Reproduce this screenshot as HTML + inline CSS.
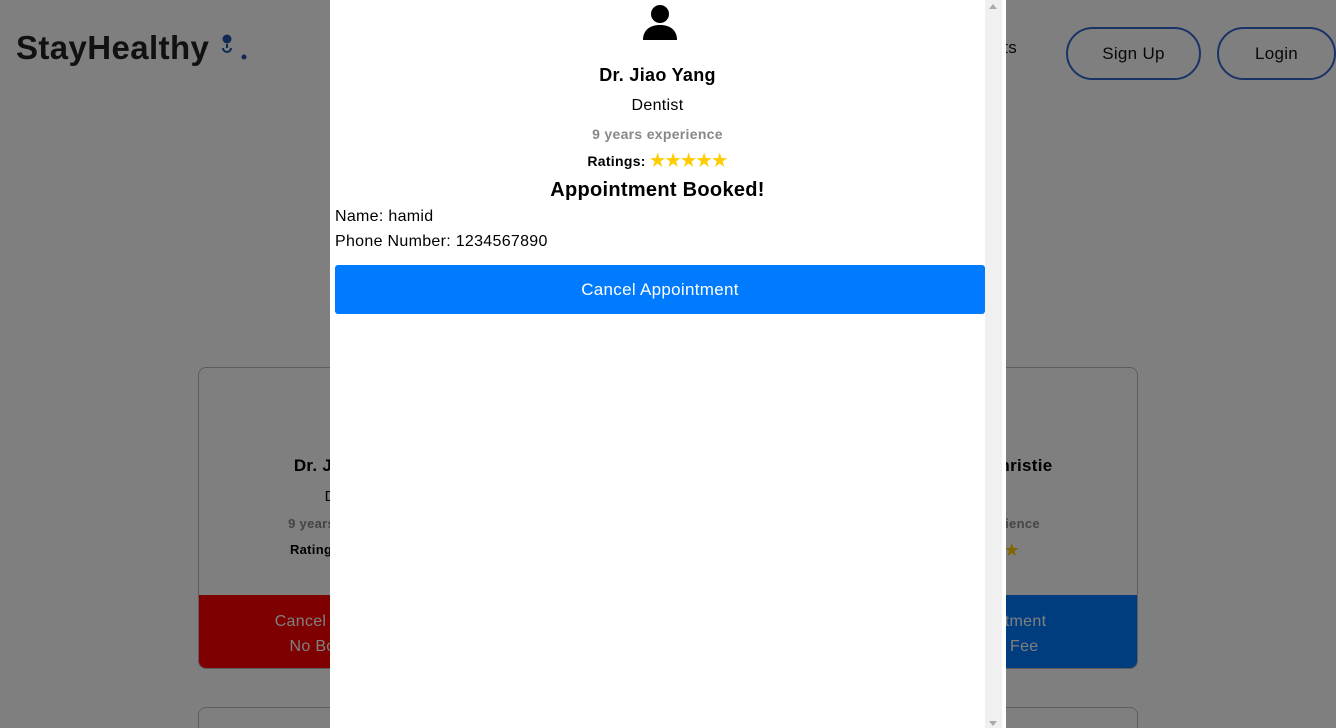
<!DOCTYPE html>
<html><head><meta charset="utf-8"><style>
*{margin:0;padding:0;box-sizing:border-box}
html,body{width:1336px;height:728px;overflow:hidden}
body{background:#fff;font-family:"Liberation Sans",sans-serif;position:relative;letter-spacing:0.3px}
.abs{position:absolute}
.logo{left:16px;top:29px;font-size:33px;font-weight:bold;color:#222;letter-spacing:0.4px}
.btn{border:2px solid #3366cc;border-radius:27px;height:53px;top:27px;font-size:17px;color:#111;display:flex;align-items:center;justify-content:center}
.card{border:1px solid #bbb;border-radius:8px;background:#fff;text-align:center;overflow:hidden}
.overlay{left:0;top:0;width:1336px;height:728px;background:rgba(0,0,0,0.5)}
.modal{left:330px;top:0;width:676px;height:728px;background:#fff}
.c{position:absolute;left:0;width:655px;text-align:center}
</style></head><body>
<div class="abs logo">StayHealthy</div>
<svg class="abs" style="left:216px;top:32px" width="36" height="32" viewBox="0 0 36 32"><circle cx="11" cy="7" r="4.5" fill="#2255aa"/><path d="M11 12v4M7 16a4 4 0 0 0 8 0" stroke="#2255aa" stroke-width="2" fill="none"/><circle cx="28" cy="25" r="2.5" fill="#2255aa"/></svg>
<div class="abs" style="right:319px;top:38px;font-size:17px;color:#111">Appointments</div>
<div class="abs btn" style="left:1066px;width:135px">Sign Up</div>
<div class="abs btn" style="left:1217px;width:119px">Login</div>
<div class="abs card" style="left:198px;top:367px;width:940px;height:302px">
<div class="abs" style="left:0;width:300px;top:88px;font-weight:bold;font-size:17px">Dr. Jiao Yang</div>
<div class="abs" style="left:0;width:300px;top:120px;font-size:15px">Dentist</div>
<div class="abs" style="left:0;width:300px;top:148px;font-size:13px;font-weight:bold;color:#888">9 years experience</div>
<div class="abs" style="left:0;width:300px;top:174px;font-size:13px;font-weight:bold">Ratings: <span style="color:#fc0">★★★★★</span></div>
<div class="abs" style="left:0;top:227px;width:300px;height:75px;background:#f00;color:#fff;font-size:16px;padding-top:14px;line-height:25px">Cancel Appointment<br>No Booking Fee</div>
<div class="abs" style="left:620px;width:320px;top:88px;font-weight:bold;font-size:17px">Dr. Denis Christie</div>
<div class="abs" style="left:620px;width:300px;top:120px;font-size:15px">Dentist</div>
<div class="abs" style="left:620px;width:320px;top:148px;font-size:13px;font-weight:bold;color:#888">9 years experience</div>
<div class="abs" style="left:640px;width:280px;top:172px;font-size:18px;color:#fc0">★★★★★</div>
<div class="abs" style="left:620px;top:227px;width:320px;height:75px;background:#007bff;color:#fff;font-size:16px;padding-top:14px;line-height:25px">Book Appointment<br>No Booking Fee</div>
</div>
<div class="abs card" style="left:198px;top:707px;width:940px;height:21px;border-bottom:none;border-radius:8px 8px 0 0"></div>
<div class="abs overlay"></div>
<div class="abs modal">
<svg class="abs" style="left:312px;top:4px" width="36" height="36" viewBox="0 0 36 36"><circle cx="18" cy="10" r="9" fill="#000"/><path d="M1 36c0-10 7-15 17-15s17 5 17 15z" fill="#000"/></svg>
<div class="c" style="top:65px;font-size:18px;font-weight:bold">Dr. Jiao Yang</div>
<div class="c" style="top:97px;font-size:16px">Dentist</div>
<div class="c" style="top:126px;font-size:14px;font-weight:bold;color:#888">9 years experience</div>
<div class="c" style="top:151px;font-size:14px;font-weight:bold">Ratings: <span style="color:#fc0;font-size:17px">★★★★★</span></div>
<div class="c" style="top:179px;font-size:20px;font-weight:bold">Appointment Booked!</div>
<div class="abs" style="left:5px;top:208px;font-size:16px">Name: hamid</div>
<div class="abs" style="left:5px;top:233px;font-size:16px">Phone Number: 1234567890</div>
<div class="abs" style="left:5px;top:265px;width:650px;height:49px;background:#007bff;color:#fff;border-radius:3px;font-size:17px;display:flex;align-items:center;justify-content:center">Cancel Appointment</div>
<div class="abs" style="left:655px;top:0;width:17px;height:728px;background:#f0f0f0"></div>
<div class="abs" style="left:659px;top:4px;width:0;height:0;border-left:4px solid transparent;border-right:4px solid transparent;border-bottom:5px solid #aaa"></div>
<div class="abs" style="left:659px;top:721px;width:0;height:0;border-left:4px solid transparent;border-right:4px solid transparent;border-top:5px solid #aaa"></div>
</div>
</body></html>
